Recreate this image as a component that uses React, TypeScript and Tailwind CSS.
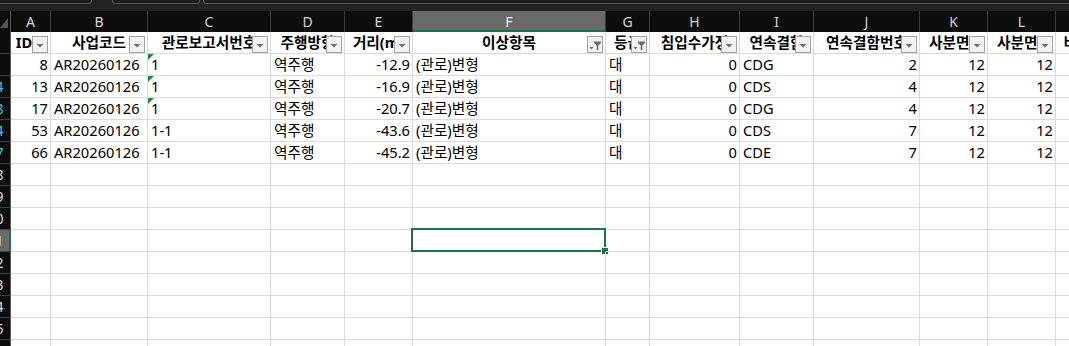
import React from 'react';

type Col = { key: string; w: string; head: string; filter?: boolean; align: 'l' | 'r' };

const cols: Col[] = [
  { key: 'A', w: 'w-[40px]', head: 'ID', align: 'r' },
  { key: 'B', w: 'w-[97px]', head: '사업코드', align: 'l' },
  { key: 'C', w: 'w-[123px]', head: '관로보고서번호', align: 'l' },
  { key: 'D', w: 'w-[74px]', head: '주행방향', align: 'l' },
  { key: 'E', w: 'w-[68px]', head: '거리(m)', align: 'r' },
  { key: 'F', w: 'w-[193px]', head: '이상항목', filter: true, align: 'l' },
  { key: 'G', w: 'w-[44px]', head: '등급', filter: true, align: 'l' },
  { key: 'H', w: 'w-[90px]', head: '침입수가정', align: 'r' },
  { key: 'I', w: 'w-[74px]', head: '연속결함', align: 'l' },
  { key: 'J', w: 'w-[106px]', head: '연속결함번호', align: 'r' },
  { key: 'K', w: 'w-[68px]', head: '사분면1', align: 'r' },
  { key: 'L', w: 'w-[68px]', head: '사분면2', align: 'r' },
  { key: 'M', w: 'w-[43px]', head: '비고', align: 'l' },
  { key: 'N', w: 'w-[80px]', head: '', align: 'l' },
];

const data: { row: number; cells: string[] }[] = [
  { row: 9, cells: ['8', 'AR20260126', '1', '역주행', '-12.9', '(관로)변형', '대', '0', 'CDG', '2', '12', '12', '', ''] },
  { row: 14, cells: ['13', 'AR20260126', '1', '역주행', '-16.9', '(관로)변형', '대', '0', 'CDS', '4', '12', '12', '', ''] },
  { row: 18, cells: ['17', 'AR20260126', '1', '역주행', '-20.7', '(관로)변형', '대', '0', 'CDG', '4', '12', '12', '', ''] },
  { row: 54, cells: ['53', 'AR20260126', '1-1', '역주행', '-43.6', '(관로)변형', '대', '0', 'CDS', '7', '12', '12', '', ''] },
  { row: 67, cells: ['66', 'AR20260126', '1-1', '역주행', '-45.2', '(관로)변형', '대', '0', 'CDE', '7', '12', '12', '', ''] },
];

const emptyRows = [68, 69, 70, 71, 72, 73, 74, 75, 76];
const selectedRow = 71;

const FilterButton = ({ active }: { active?: boolean }) => (
  <div className="absolute right-[2px] top-[4px] w-[16px] h-[17px] border border-[#a3a3a3] bg-[#f2f2f2] flex items-center justify-center">
    {active ? (
      <svg width="14" height="14" viewBox="0 0 14 14">
        <polygon points="1.5,9 5.5,9 3.5,11.5" fill="#6b6b6b" />
        <polygon points="6,3.5 13,3.5 13,5 10.3,7.5 10.3,12 8.7,12 8.7,7.5 6,5" fill="#6b6b6b" />
      </svg>
    ) : (
      <svg width="10" height="10" viewBox="0 0 10 10">
        <polygon points="1.5,4 8.5,4 5,7.5" fill="#6b6b6b" />
      </svg>
    )}
  </div>
);

const RowHeader = ({ n, filtered, selected }: { n?: number; filtered?: boolean; selected?: boolean }) => (
  <div
    className={`w-[11px] h-[22px] shrink-0 overflow-hidden border-b border-[#404040] ${
      selected ? 'bg-[#6a6a6a] border-r-2 border-r-[#217346]' : 'bg-[#0d0d0d] border-r border-r-[#5a5a5a]'
    }`}
  >
    <div
      className={`w-[29px] ml-[-19px] h-[21px] text-center text-[14px] leading-[21px] ${
        filtered ? 'text-[#3ec6ec]' : 'text-[#dcdcdc]'
      }`}
    >
      {n}
    </div>
  </div>
);

export default function App() {
  return (
    <div
      className="w-[1069px] h-[346px] overflow-hidden bg-white"
      style={{ fontFamily: '"Noto Sans", "Noto Sans CJK KR", sans-serif' }}
    >
      {/* window tab strip */}
      <div className="h-[11px] bg-[#232323] flex">
        <div className="w-[92px] h-[4px] border-b border-r border-[#555] rounded-br-[5px] bg-[#1b1b1b]" />
        <div className="w-[20px]" />
        <div className="w-[88px] h-[4px] border-b border-x border-[#555] rounded-b-[5px] bg-[#1b1b1b]" />
        <div className="w-[3px]" />
        <div className="flex-1 h-[4px] border-b border-l border-[#555] rounded-bl-[5px] bg-[#1b1b1b]" />
      </div>

      {/* column letters */}
      <div className="flex h-[21px] bg-[#0d0d0d] w-max">
        <div className="w-[11px] shrink-0 border-r border-[#5a5a5a] flex items-end">
          <svg width="9" height="12" viewBox="0 0 9 12" className="mb-[4px]">
            <polygon points="0,12 8,12 8,2" fill="#555" />
          </svg>
        </div>
        {cols.map((c) => (
          <div
            key={c.key}
            className={`${c.w} shrink-0 border-r border-[#3c3c3c] text-center text-[14px] leading-[21px] ${
              c.key === 'F' ? 'bg-[#6a6a6a] text-[#f0f0f0] border-b-2 border-b-[#217346]' : 'text-[#d6d6d6]'
            }`}
          >
            {c.key}
          </div>
        ))}
      </div>

      {/* header row 1 */}
      <div className="flex w-max">
        <RowHeader n={1} />
        {cols.map((c) => (
          <div
            key={c.key}
            className={`${c.w} h-[22px] shrink-0 relative overflow-hidden border-r border-b border-[#dadada] text-[14.67px] leading-[21px] font-bold text-black whitespace-nowrap flex justify-center`}
          >
            <span className={c.key === 'A' ? 'mr-[13px]' : ''}>{c.head}</span>
            {c.head && <FilterButton active={c.filter} />}
          </div>
        ))}
      </div>

      {/* data rows */}
      {data.map((r, ri) => (
        <div key={r.row} className="flex w-max">
          <RowHeader n={r.row} filtered />
          {cols.map((c, i) => (
            <div
              key={c.key}
              className={`${c.w} h-[22px] shrink-0 relative overflow-hidden border-r border-b border-[#dadada] text-[14.67px] leading-[21px] text-black whitespace-nowrap ${
                c.align === 'r' ? 'text-right pr-[2px]' : 'text-left pl-[3px]'
              }`}
            >
              {c.key === 'C' && ri < 3 && (
                <svg width="6" height="6" viewBox="0 0 6 6" className="absolute left-0 top-0">
                  <polygon points="0,0 6,0 0,6" fill="#1e8a3e" />
                </svg>
              )}
              {r.cells[i]}
            </div>
          ))}
        </div>
      ))}

      {/* empty rows */}
      {emptyRows.map((n) => (
        <div key={n} className="flex w-max">
          <RowHeader n={n} selected={n === selectedRow} />
          {cols.map((c) => (
            <div
              key={c.key}
              className={`${c.w} h-[22px] shrink-0 relative border-r border-b border-[#dadada]`}
            >
              {n === selectedRow && c.key === 'F' && (
                <div className="absolute left-[-2px] top-[-2px] w-[195px] h-[24px] border-2 border-[#217346]">
                  <div className="absolute right-[-4px] bottom-[-4px] w-[6px] h-[6px] bg-[#217346] outline outline-1 outline-white" />
                </div>
              )}
            </div>
          ))}
        </div>
      ))}
    </div>
  );
}
